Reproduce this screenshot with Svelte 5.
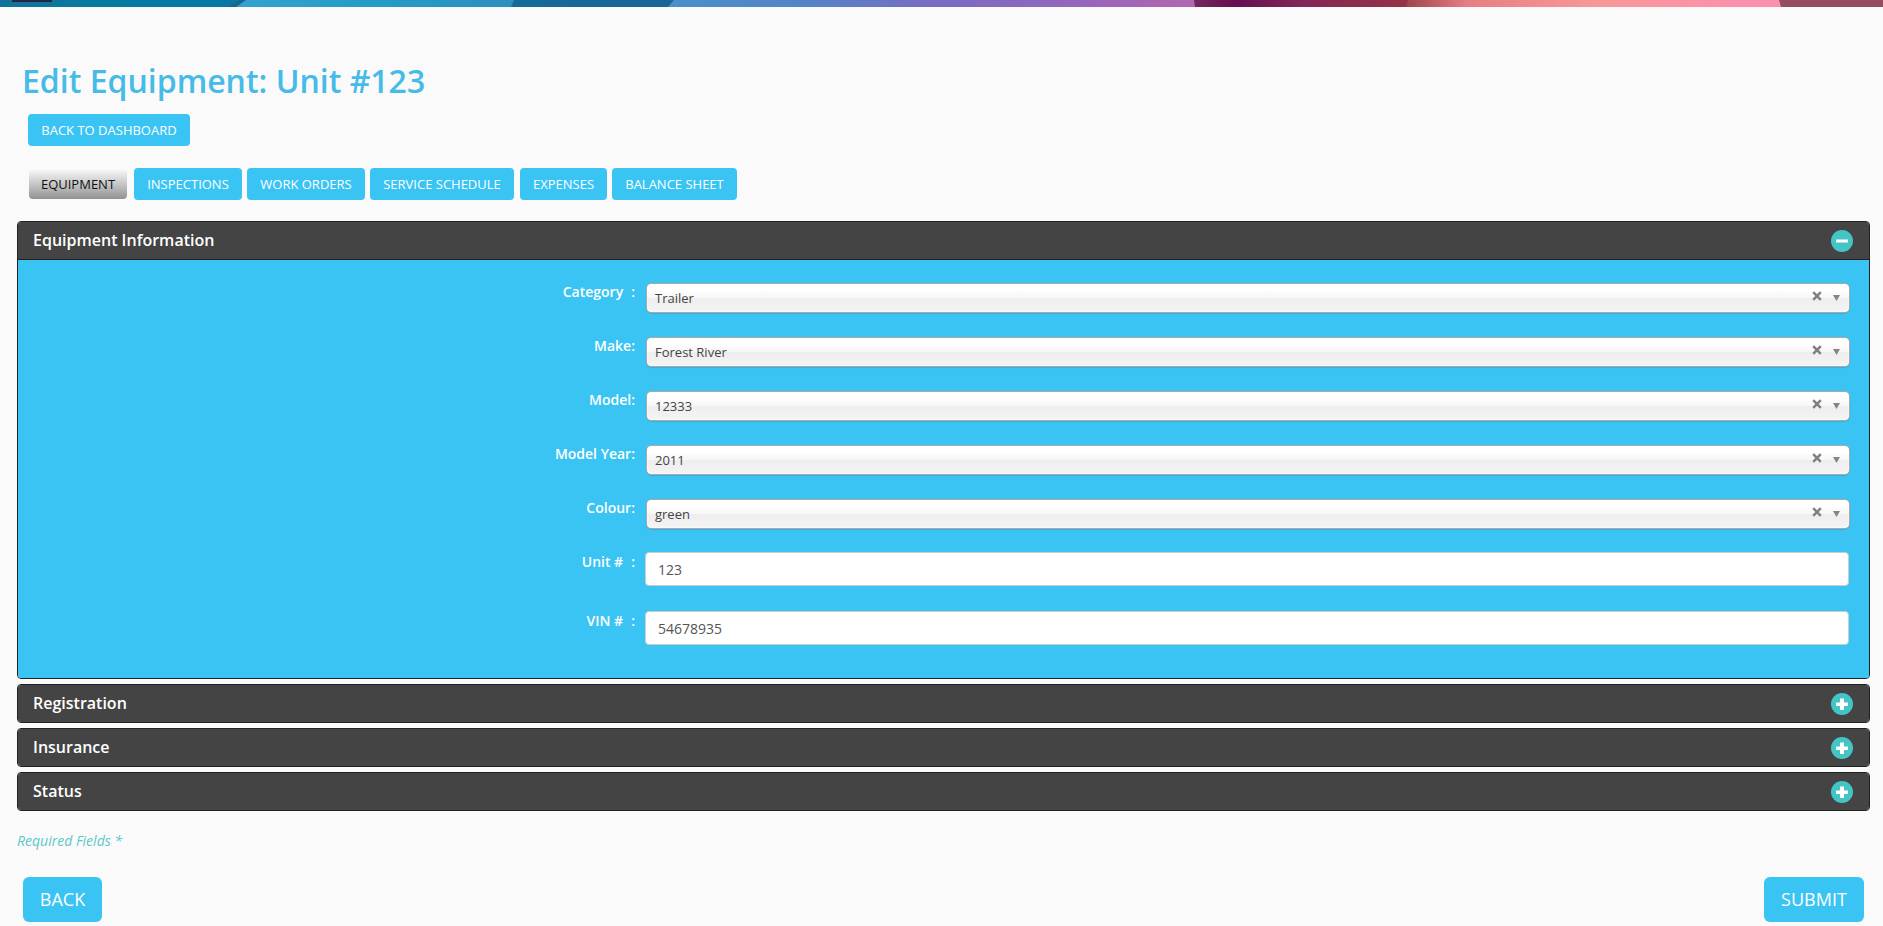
<script>
  const tabs = [
    { label: 'INSPECTIONS', width: 108 },
    { label: 'WORK ORDERS', width: 118 },
    { label: 'SERVICE SCHEDULE', width: 144 },
    { label: 'EXPENSES', width: 87 },
    { label: 'BALANCE SHEET', width: 125 }
  ];
  const selects = [
    { label: 'Category', colon: true, value: 'Trailer' },
    { label: 'Make:', value: 'Forest River' },
    { label: 'Model:', value: '12333' },
    { label: 'Model Year:', value: '2011' },
    { label: 'Colour:', value: 'green' }
  ];
  const inputs = [
    { label: 'Unit #', value: '123' },
    { label: 'VIN #', value: '54678935' }
  ];
  const closed = ['Registration', 'Insurance', 'Status'];
</script>

{#snippet toggle(open)}
  <svg class="toggle" width="22" height="22" viewBox="0 0 22 22">
    <circle cx="11" cy="11" r="11" fill="#43c5c5" />
    <path d={open ? 'M5 9.5h12v3H5z' : 'M5 9.5h4v-4h4v4h4v3.5h-4v4H9v-4H5z'} fill="#fff" />
  </svg>
{/snippet}

<div class="page">
  <svg class="banner" width="1883" height="7" viewBox="0 0 1883 7" preserveAspectRatio="none">
    <defs>
      <linearGradient id="b1"><stop offset="0" stop-color="#117299" /><stop offset=".4" stop-color="#087aa1" /><stop offset="1" stop-color="#0877a5" /></linearGradient>
      <linearGradient id="b2"><stop offset="0" stop-color="#36a2cf" /><stop offset=".5" stop-color="#239cc6" /><stop offset="1" stop-color="#2f8fbd" /></linearGradient>
      <linearGradient id="b3"><stop offset="0" stop-color="#146b98" /><stop offset="1" stop-color="#1d6496" /></linearGradient>
      <linearGradient id="b4"><stop offset="0" stop-color="#4990cd" /><stop offset=".25" stop-color="#5484c7" /><stop offset=".52" stop-color="#7a6bc3" /><stop offset=".8" stop-color="#9766bb" /><stop offset="1" stop-color="#b367ae" /></linearGradient>
      <linearGradient id="b5"><stop offset="0" stop-color="#74255e" /><stop offset=".2" stop-color="#640f50" /><stop offset=".5" stop-color="#822657" /><stop offset="1" stop-color="#963345" /></linearGradient>
      <linearGradient id="b6"><stop offset="0" stop-color="#9d444d" /><stop offset=".16" stop-color="#e77d84" /><stop offset=".5" stop-color="#f89898" /><stop offset="1" stop-color="#fb8fb2" /></linearGradient>
    </defs>
    <rect width="245" height="7" fill="url(#b1)" />
    <path d="M244 0H520V7H230z" fill="url(#b2)" />
    <path d="M240 0h6L236 7h-8z" fill="#15668c" />
    <path d="M514 0H680V7H511z" fill="url(#b3)" />
    <path d="M674 0H1196V7H668z" fill="url(#b4)" />
    <path d="M1194 0H1410V7H1195z" fill="url(#b5)" />
    <path d="M1408 0H1782V7H1406z" fill="url(#b6)" />
    <path d="M1779 0H1883V7H1781z" fill="#974d60" />
    <rect x="12" width="40" height="2" fill="#262441" />
  </svg>

  <h1>Edit Equipment: Unit #123</h1>
  <button class="btn dash">BACK TO DASHBOARD</button>

  <nav>
    <button class="btn current">EQUIPMENT</button>
    {#each tabs as t}
      <button class="btn" style="width: {t.width}px">{t.label}</button>
    {/each}
  </nav>

  <section class="panel">
    <header class="open"><h2>Equipment Information</h2>{@render toggle(true)}</header>
    <div class="body">
      {#each selects as s}
        <div class="row">
          <span class="label">{s.label}{#if s.colon}<span class="colon">:</span>{/if}</span>
          <div class="select">
            <span class="value">{s.value}</span>
            <svg class="clear" width="10" height="10" viewBox="0 0 10 10"><path d="M1.2 1.2l7.6 7.6M8.8 1.2L1.2 8.8" stroke="#808080" stroke-width="2.5" /></svg>
            <svg class="arrow" width="7" height="6" viewBox="0 0 7 6"><path d="M0 0h7L3.5 6z" fill="#858585" /></svg>
          </div>
        </div>
      {/each}
      {#each inputs as f}
        <div class="row field">
          <span class="label">{f.label}<span class="colon">:</span></span>
          <input type="text" value={f.value} />
        </div>
      {/each}
    </div>
  </section>

  {#each closed as name}
    <section class="panel">
      <header><h2>{name}</h2>{@render toggle(false)}</header>
    </section>
  {/each}

  <p>Required Fields *</p>

  <footer>
    <button class="btn big back">BACK</button>
    <button class="btn big submit">SUBMIT</button>
  </footer>
</div>

<style>
  :global(body) {
    margin: 0;
    background: #fafafa;
    overflow: hidden;
  }
  .page {
    box-sizing: border-box;
    width: 1883px;
    height: 926px;
    overflow: hidden;
    background: #fafafa;
    font-family: 'Open Sans', sans-serif;
  }
  .banner {
    display: block;
  }
  h1 {
    margin: 52px 0 0 22px;
    font-size: 32px;
    line-height: 44px;
    font-weight: 600;
    color: #46bbe8;
    white-space: nowrap;
  }
  .btn {
    display: block;
    box-sizing: border-box;
    flex: none;
    height: 32px;
    padding: 0;
    border: 0;
    border-radius: 4px;
    background: #3ac4f3;
    color: #fff;
    font: 400 13px/32px 'Open Sans', sans-serif;
    text-align: center;
    white-space: nowrap;
  }
  .dash {
    width: 162px;
    margin: 11px 0 0 28px;
  }
  nav {
    display: flex;
    align-items: center;
    gap: 5px;
    margin: 22px 0 21px 29px;
  }
  nav .btn:nth-child(5) {
    margin-left: 1px;
  }
  .current {
    width: 98px;
    height: 30px;
    margin-right: 2px;
    line-height: 30px;
    color: #111;
    background: linear-gradient(#fafafa, #929292);
  }
  .panel {
    box-sizing: border-box;
    width: 1853px;
    margin: 0 0 5px 17px;
    border: 1px solid #222;
    border-radius: 4px;
    overflow: hidden;
  }
  header {
    display: flex;
    align-items: flex-start;
    justify-content: space-between;
    box-sizing: border-box;
    height: 37px;
    padding: 0 16px 0 15px;
    background: #444;
  }
  header.open {
    height: 38px;
    border-bottom: 1px solid #222;
  }
  h2 {
    margin: 0;
    font-size: 16px;
    line-height: 36px;
    font-weight: 600;
    color: #fff;
  }
  .toggle {
    margin-top: 8px;
  }
  .body {
    box-sizing: border-box;
    height: 418px;
    padding-top: 23px;
    background: #3ac4f3;
  }
  .row {
    display: flex;
    align-items: flex-start;
    height: 54px;
  }
  .row.field {
    height: 59px;
  }
  .label {
    box-sizing: border-box;
    width: 617px;
    flex: none;
    font-size: 14px;
    line-height: 20px;
    margin: -1px 1px 0 0;
    font-weight: 600;
    color: #fff;
    text-align: right;
  }
  .colon {
    margin-left: 8px;
  }
  .select {
    display: flex;
    align-items: center;
    box-sizing: border-box;
    width: 1204px;
    height: 30px;
    margin-left: 10px;
    padding: 0 9px 0 8px;
    border: 1px solid #aaa;
    border-radius: 5px;
    background: linear-gradient(#fff 20%, #f6f6f6 50%, #eee 52%, #f4f4f4 100%);
    box-shadow: 0 0 3px #fff inset, 0 1px 1px rgba(0, 0, 0, 0.1);
  }
  .value {
    flex: 1;
    font-size: 13px;
    line-height: 28px;
    color: #444;
  }
  .clear {
    margin: -4px 11px 0 0;
  }
  .arrow {
    margin-top: -1px;
  }
  input {
    box-sizing: border-box;
    width: 1204px;
    height: 34px;
    margin: -1px 0 0 9px;
    padding: 0 12px;
    border: 1px solid #ccc;
    border-radius: 4px;
    background: #fff;
    color: #555;
    font: 400 14px/20px 'Open Sans', sans-serif;
    outline: none;
  }
  p {
    margin: 20px 0 0 17px;
    font-size: 14px;
    line-height: 20px;
    font-style: italic;
    color: #5cc8c8;
  }
  footer {
    display: flex;
    justify-content: space-between;
    margin: 26px 19px 0 23px;
  }
  .big {
    height: 45px;
    border-radius: 6px;
    font-size: 18px;
    line-height: 45px;
  }
  .back {
    width: 79px;
  }
  .submit {
    width: 100px;
  }
</style>
